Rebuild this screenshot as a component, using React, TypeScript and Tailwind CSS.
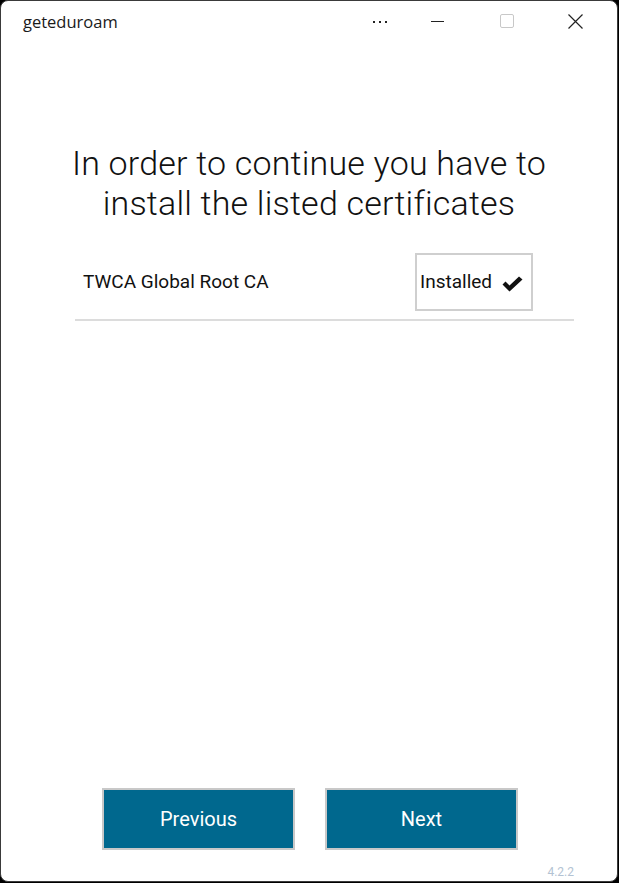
const App = () => {
  return (
    <div className="h-[883px] w-[619px] bg-black">
      <div className="flex h-[882px] w-[618px] flex-col overflow-hidden rounded-[8px] border border-[#3a3a3a] bg-white font-['Liberation_Sans',sans-serif] text-black">
        {/* title bar */}
        <div className="flex h-[40px] shrink-0 items-center pl-[22px]">
          <span className="pt-[3px] font-['Open_Sans',sans-serif] text-[16.5px] text-[#1a1a1a]">geteduroam</span>
          <div className="ml-auto flex h-full items-center">
            <div className="flex w-[26px] items-center justify-center gap-[4px] pt-[2px]">
              <span className="h-[2px] w-[2px] bg-[#222]" />
              <span className="h-[2px] w-[2px] bg-[#222]" />
              <span className="h-[2px] w-[2px] bg-[#222]" />
            </div>
            <div className="flex w-[88px] items-center justify-center">
              <span className="h-[1px] w-[13px] bg-[#222]" />
            </div>
            <div className="flex w-[52px] items-center justify-center">
              <span className="h-[14px] w-[14px] rounded-[2px] border border-[#c8c8c8]" />
            </div>
            <div className="flex w-[84px] items-center justify-center">
              <svg width="15" height="15" viewBox="0 0 15 15">
                <path d="M0.5 0.5 L14.5 14.5 M14.5 0.5 L0.5 14.5" stroke="#222" strokeWidth="1.2" />
              </svg>
            </div>
          </div>
        </div>

        {/* heading */}
        <div className="mt-[102px] text-center font-['Roboto',sans-serif] text-[34px] font-light leading-[40px] tracking-[0.2px] text-[#111]">
          <div>In order to continue you have to</div>
          <div>install the listed certificates</div>
        </div>

        {/* certificate row */}
        <div className="ml-[74px] mr-[43px] mt-[30px] flex items-center border-b-2 border-[#dcdcdc] pb-[8px] pl-[8px] pr-[41px]">
          <span className="font-['Roboto',sans-serif] text-[19px] text-[#111]">TWCA Global Root CA</span>
          <div className="ml-auto flex h-[58px] w-[118px] items-center border-2 border-[#cfcfcf] pl-[3px]">
            <span className="font-['Roboto',sans-serif] text-[19px] text-[#111]">Installed</span>
            <svg className="ml-[10px] mt-[4px]" width="21" height="16" viewBox="0 0 21 16">
              <path d="M0.5 8.5 L3.5 5.5 L7.5 9.5 L17 0.5 L20.5 3.5 L7.5 15.5 Z" fill="#111" />
            </svg>
          </div>
        </div>

        {/* buttons */}
        <div className="mt-auto flex justify-center gap-[30px] pl-[2px]">
          <button className="h-[62px] w-[193px] border-2 border-[#c8c8c8] bg-[#00688e] font-['Roboto',sans-serif] text-[20px] text-white">
            Previous
          </button>
          <button className="h-[62px] w-[193px] border-2 border-[#c8c8c8] bg-[#00688e] font-['Roboto',sans-serif] text-[20px] text-white">
            Next
          </button>
        </div>
        <div className="flex h-[31px] items-center justify-end pr-[43px] pt-[12px]">
          <span className="font-['Roboto',sans-serif] text-[12px] text-[#b3c3d3]">4.2.2</span>
        </div>
      </div>
    </div>
  );
};

export default App;
